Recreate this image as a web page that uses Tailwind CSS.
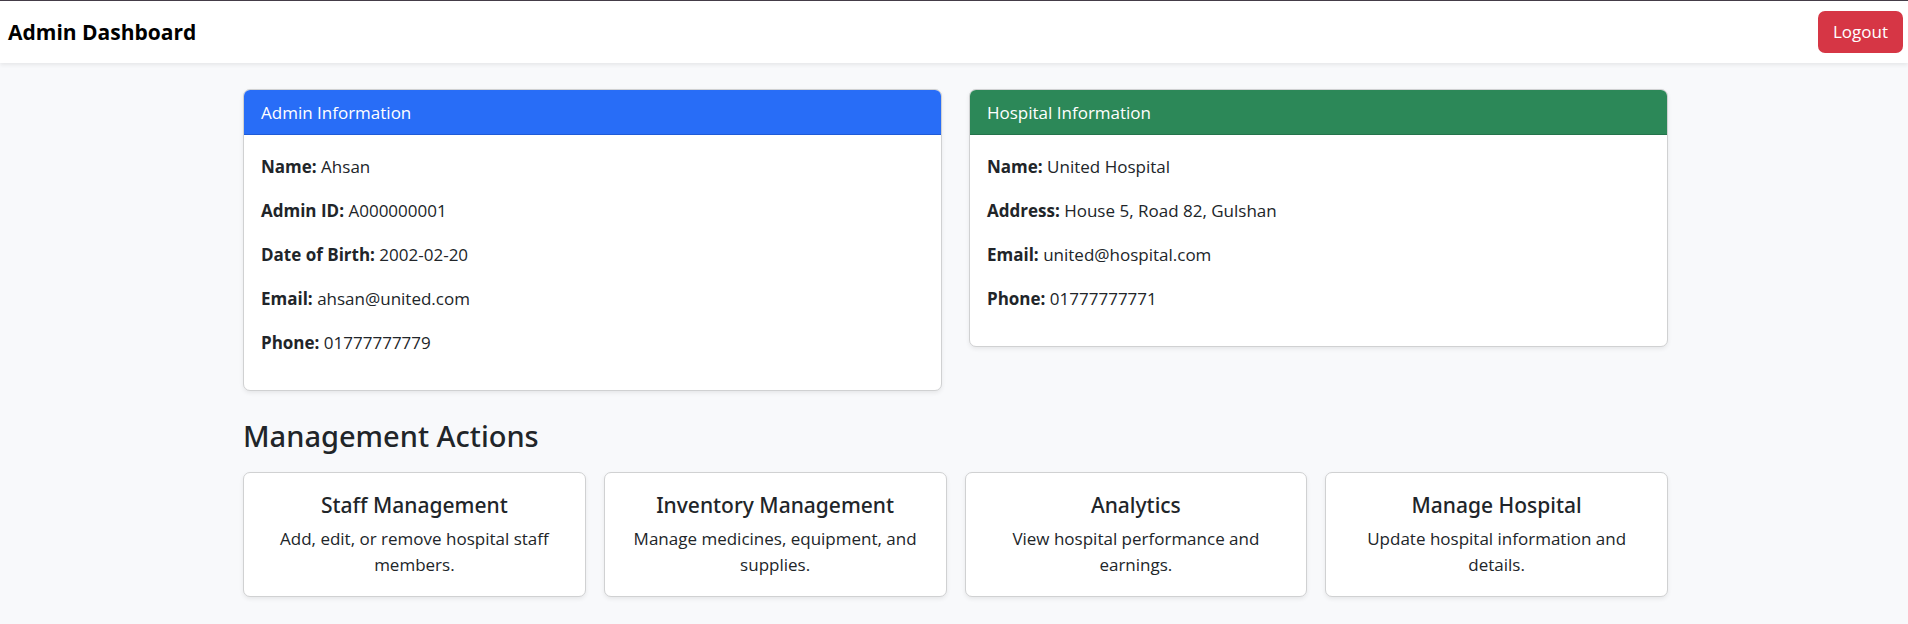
<!DOCTYPE html>
<html lang="en">
<head>
<meta charset="utf-8">
<meta name="viewport" content="width=device-width, initial-scale=1">
<title>Admin Dashboard</title>
<script src="https://cdn.jsdelivr.net/npm/@tailwindcss/browser@4"></script>
</head>
<body class="min-h-screen bg-[#f8f9fb] font-['Open_Sans','Noto_Sans',sans-serif] text-[17px] leading-[26px] text-[#212529]">
  <header class="flex items-center justify-between border-t border-[#443c48] bg-white py-[10px] pr-[5px] pl-2 shadow-[0_2px_4px_rgba(0,0,0,0.075)]">
    <h1 class="text-[21px] font-bold text-black">Admin Dashboard</h1>
    <button type="button" class="rounded-[7px] bg-[#d63645] px-[15px] py-2 text-white">Logout</button>
  </header>

  <main class="mx-auto max-w-[1452px] pt-[26px] pr-3 pl-[15px]">
    <div class="grid items-start gap-x-[27px] gap-y-6 md:grid-cols-2">
      <section class="overflow-hidden rounded-[7px] border border-[#d0d1d2] bg-white shadow-[0_2px_4px_rgba(0,0,0,0.075)]">
        <h2 class="border-b border-[#1f5bd6] bg-[#286df7] px-[17px] pt-[10px] pb-2 text-white">Admin Information</h2>
        <div class="space-y-[18px] px-[17px] pt-[19px] pb-[34px]">
          <p><strong>Name:</strong> Ahsan</p>
          <p><strong>Admin ID:</strong> A000000001</p>
          <p><strong>Date of Birth:</strong> 2002-02-20</p>
          <p><strong>Email:</strong> ahsan@united.com</p>
          <p><strong>Phone:</strong> 01777777779</p>
        </div>
      </section>
      <section class="overflow-hidden rounded-[7px] border border-[#d0d1d2] bg-white shadow-[0_2px_4px_rgba(0,0,0,0.075)]">
        <h2 class="border-b border-[#24734b] bg-[#2c8858] px-[17px] pt-[10px] pb-2 text-white">Hospital Information</h2>
        <div class="space-y-[18px] px-[17px] pt-[19px] pb-[34px]">
          <p><strong>Name:</strong> United Hospital</p>
          <p><strong>Address:</strong> House 5, Road 82, Gulshan</p>
          <p><strong>Email:</strong> united@hospital.com</p>
          <p><strong>Phone:</strong> 01777777771</p>
        </div>
      </section>
    </div>

    <h2 class="mt-[26px] mb-[18px] font-['Noto_Sans',sans-serif] text-[29px] leading-[37px] font-medium">Management Actions</h2>

    <div class="grid gap-[18px] pb-6 text-center sm:grid-cols-2 lg:grid-cols-4">
      <a href="#staff" class="rounded-[7px] border border-[#d0d1d2] bg-white px-[18px] pt-[19px] pb-[18px] shadow-[0_2px_4px_rgba(0,0,0,0.075)]">
        <h3 class="mb-2 font-['Noto_Sans',sans-serif] text-[21px] font-medium">Staff Management</h3>
        <p>Add, edit, or remove hospital staff members.</p>
      </a>
      <a href="#inventory" class="rounded-[7px] border border-[#d0d1d2] bg-white px-[18px] pt-[19px] pb-[18px] shadow-[0_2px_4px_rgba(0,0,0,0.075)]">
        <h3 class="mb-2 font-['Noto_Sans',sans-serif] text-[21px] font-medium">Inventory Management</h3>
        <p>Manage medicines, equipment, and supplies.</p>
      </a>
      <a href="#analytics" class="rounded-[7px] border border-[#d0d1d2] bg-white px-[18px] pt-[19px] pb-[18px] shadow-[0_2px_4px_rgba(0,0,0,0.075)]">
        <h3 class="mb-2 font-['Noto_Sans',sans-serif] text-[21px] font-medium">Analytics</h3>
        <p>View hospital performance and earnings.</p>
      </a>
      <a href="#hospital" class="rounded-[7px] border border-[#d0d1d2] bg-white px-[18px] pt-[19px] pb-[18px] shadow-[0_2px_4px_rgba(0,0,0,0.075)]">
        <h3 class="mb-2 font-['Noto_Sans',sans-serif] text-[21px] font-medium">Manage Hospital</h3>
        <p>Update hospital information and details.</p>
      </a>
    </div>
  </main>
</body>
</html>
